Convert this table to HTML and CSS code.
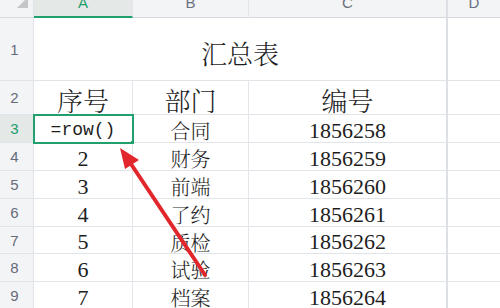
FILE: index.html
```html
<!DOCTYPE html>
<html lang="zh">
<head>
<meta charset="utf-8">
<link rel="stylesheet" href="styles.css">
</head>
<body>
<div class="sheet">
  <div class="grid">
    <div class="hd corner"><span class="tri"></span></div>
    <div class="hd col active"><span>A</span></div>
    <div class="hd col"><span>B</span></div>
    <div class="hd col wide"><span>C</span></div>
    <div class="hd col last"><span>D</span></div>

    <div class="rh">1</div>
    <div class="c title">汇总表</div>
    <div class="c last"></div>

    <div class="rh">2</div>
    <div class="c big">序号</div>
    <div class="c big">部门</div>
    <div class="c big wide">编号</div>
    <div class="c last"></div>

    <div class="rh active">3</div>
    <div class="c sel"><span class="mono">=row()</span></div>
    <div class="c zh">合同</div>
    <div class="c num wide">1856258</div>
    <div class="c last"></div>

    <div class="rh">4</div>
    <div class="c num">2</div>
    <div class="c zh">财务</div>
    <div class="c num wide">1856259</div>
    <div class="c last"></div>

    <div class="rh">5</div>
    <div class="c num">3</div>
    <div class="c zh">前端</div>
    <div class="c num wide">1856260</div>
    <div class="c last"></div>

    <div class="rh">6</div>
    <div class="c num">4</div>
    <div class="c zh">了约</div>
    <div class="c num wide">1856261</div>
    <div class="c last"></div>

    <div class="rh">7</div>
    <div class="c num">5</div>
    <div class="c zh">质检</div>
    <div class="c num wide">1856262</div>
    <div class="c last"></div>

    <div class="rh">8</div>
    <div class="c num">6</div>
    <div class="c zh">试验</div>
    <div class="c num wide">1856263</div>
    <div class="c last"></div>

    <div class="rh">9</div>
    <div class="c num">7</div>
    <div class="c zh">档案</div>
    <div class="c num wide">1856264</div>
    <div class="c last"></div>
  </div>
  <svg class="arrow" width="500" height="308" viewBox="0 0 500 308">
    <line x1="205" y1="275" x2="129" y2="161" stroke="#e1262c" stroke-width="4" stroke-linecap="round"/>
    <polygon points="120,148 139,160 125,169" fill="#e1262c"/>
  </svg>
</div>
</body>
</html>
```
FILE: styles.css
```css
html, body {
  margin: 0;
  padding: 0;
  background: #ffffff;
  overflow: hidden;
}
.sheet {
  position: relative;
  width: 500px;
  height: 308px;
  overflow: hidden;
}
.grid {
  display: grid;
  grid-template-columns: 34px 99px 116px 199px 52px;
  grid-template-rows: 18px 63px 34px 28px 28px 28px 28px 27px 28px 28px;
}
.grid > div {
  box-sizing: border-box;
  border-right: 1px solid #e1e4e8;
  border-bottom: 1px solid #e1e4e8;
  overflow: hidden;
}
.hd {
  background: #f3f4f5;
  border-bottom: 1px solid #d6d9dd !important;
  display: flex;
  justify-content: center;
  align-items: flex-start;
  font-family: "Liberation Sans", "Noto Sans", sans-serif;
  font-size: 15px;
  color: #6b7080;
}
.hd span {
  display: block;
  line-height: 15px;
  margin-top: -5px;
}
.hd.active {
  background: #e4e8e6;
  color: #21a06e;
  border-bottom: 2px solid #21a06e !important;
}
.corner {
  position: relative;
}
.tri {
  position: absolute;
  left: 17px;
  top: 2px;
  width: 0;
  height: 0;
  border-left: 11px solid transparent;
  border-bottom: 11px solid #c4c6c9;
}
.rh {
  background: #f3f4f5;
  display: flex;
  justify-content: center;
  align-items: center;
  padding-right: 4px;
  font-family: "Liberation Sans", "Noto Sans", sans-serif;
  font-size: 15px;
  color: #666b7a;
}
.rh.active {
  background: #e4e8e6;
  color: #21a06e;
}
.c {
  display: flex;
  justify-content: center;
  align-items: center;
  color: #1e1e1e;
  padding-top: 2px;
}
.wide {
  border-right: 2px solid #dcdfe3 !important;
}
.last {
  border-right: none !important;
}
.title {
  grid-column: 2 / 5;
  border-right: 2px solid #dcdfe3 !important;
  font-family: "Noto Serif CJK SC", "Noto Sans CJK SC", serif;
  font-weight: 300;
  font-size: 26px;
  padding-top: 6px;
}
.big {
  font-family: "Noto Serif CJK SC", "Noto Sans CJK SC", serif;
  font-weight: 300;
  font-size: 26px;
  padding-top: 4px;
}
.zh {
  font-family: "Noto Serif CJK SC", "Noto Sans CJK SC", serif;
  font-weight: 300;
  font-size: 20px;
  padding-top: 4px;
}
.num {
  font-family: "Liberation Serif", "Times New Roman", serif;
  font-size: 22px;
  padding-top: 4px;
}
.sel {
  position: relative;
  outline: 2px solid #21a06e;
  outline-offset: -1px;
  z-index: 1;
}
.sel::after {
  content: "";
  position: absolute;
  right: -3px;
  bottom: -3px;
  width: 5px;
  height: 5px;
  background: #21a06e;
  border: 1px solid #ffffff;
  box-sizing: border-box;
}
.mono {
  font-family: "Liberation Mono", "DejaVu Sans Mono", monospace;
  font-size: 18px;
  color: #1e1e1e;
}
.arrow {
  position: absolute;
  left: 0;
  top: 0;
  pointer-events: none;
  z-index: 2;
}
```
